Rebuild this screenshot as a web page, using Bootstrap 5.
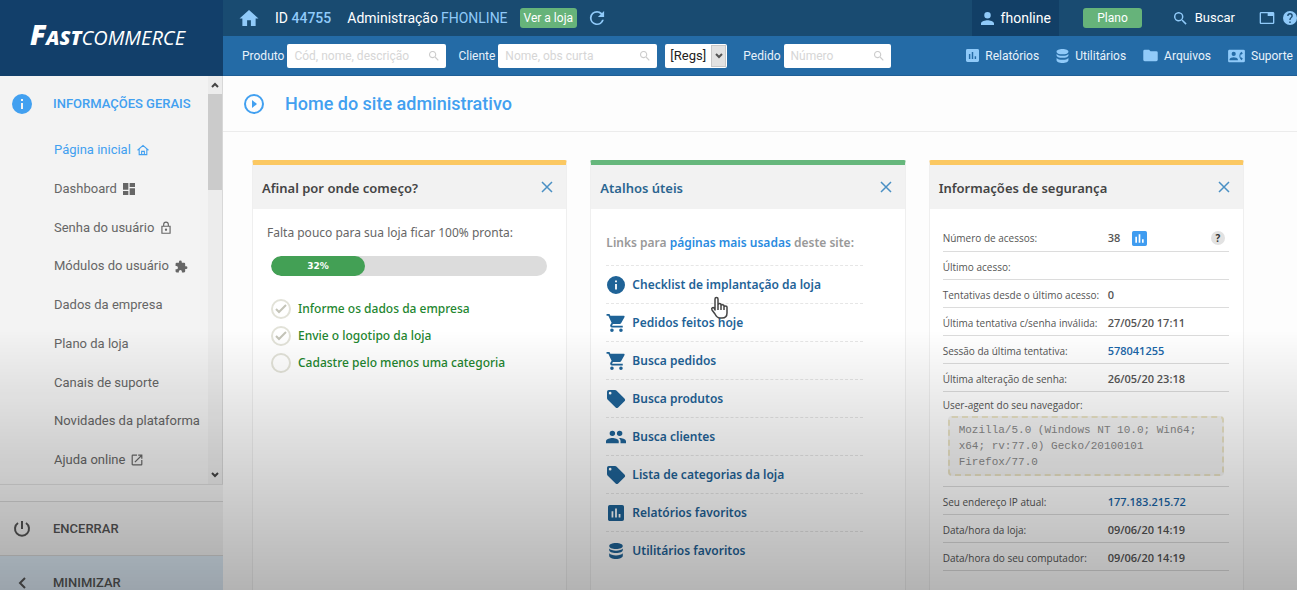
<!DOCTYPE html>
<html lang="pt-BR">
<head>
<meta charset="utf-8">
<meta name="viewport" content="width=device-width, initial-scale=1">
<title>Fastcommerce - Home do site administrativo</title>
<link href="https://cdn.jsdelivr.net/npm/bootstrap@5.3.0/dist/css/bootstrap.min.css" rel="stylesheet">
<style>
body{font-family:Roboto,"Liberation Sans",sans-serif;font-size:13px;line-height:20px;color:#666;background:#fdfdfd;height:100vh;overflow:hidden}
a{text-decoration:none;color:inherit}
svg{fill:currentColor;flex:none;display:block}
.ln{fill:none;stroke:currentColor;stroke-width:2}
/* sidebar */
.side{width:223px;height:100vh;background:#f3f3f3;overflow:hidden}
.brand{height:76px;background:#123f6a;color:#fff;padding:0 0 4px 30px;font:italic 400 20px/26px "Open Sans",sans-serif}
.brand b{font-weight:800}
.brand .cap{font-size:28px}
.menu-area{height:calc(100vh - 181px);border-bottom:1px solid #ddd}
.menu-head{height:56px;padding:0 12px;color:#42a0f0;font-weight:500}
.menu-head svg{margin-right:21px}
.menu-list{padding:8px 0 14px 54px}
.menu-list a{display:flex;align-items:center;gap:6px}
.menu-list .on{color:#42a0f0}
.sbar{width:15px;background:#ececec;border-right:1px solid #d8d8d8;color:#444}
.sbar i{height:96px;background:#cbcbcb}
.foot-item{height:54px;border:0;border-top:1px solid #d5d5d5;background:#f1f1f1;color:#555;font-weight:500;padding:0 12px;gap:21px}
.foot-item.mini{background:#dbe8f3}
/* bars */
.bar1{height:36px;background:#194b71;color:#fff;font-size:14px;padding-left:16px}
.bar2{height:40px;background:#246ba6;color:#e8f2fb;font-size:12px;padding-left:19px;border-bottom:1px solid #1f5f96}
.sky{color:#90caf9}
.fs13{font-size:13px}
.btn-go{background:#66b37a;color:#fff;font-size:12px;line-height:20px;padding:0 4px;border:0;border-radius:3px}
.btn-go.wide{padding:0 14px}
.user{background:#123f66;width:87px;height:36px;gap:7px}
.find{width:159px;height:24px;background:#fff;border-radius:2px;padding:0 7px;color:#ccc}
.find.short{width:107px}
.find input{border:0;outline:0;background:none;min-width:0;width:100%;padding:0;font-size:12px}
.find input::placeholder{color:#d6d6d6;opacity:1}
.regs{width:62px;height:24px;background:#fff;border-radius:2px}
.regs select{appearance:none;border:0;background:none;font-size:13px;color:#222;width:47px;padding:0 0 0 5px}
.regs span{width:16px;height:22px;margin-right:1px;background:#e2e2e2;border:1px solid #c8c8c8;color:#555}
.gap-l{margin-right:3px}
.tools{gap:17px;padding-right:4px}
.tools a{display:flex;align-items:center;gap:6px}
.tools svg{color:#90caf9}
/* content */
.page-head{height:56px;border-bottom:1px solid #ececec;padding-left:20px;gap:20px;color:#42a0f0}
.page-head h1{font-size:18px;line-height:24px;font-weight:500;margin:0}
.board{display:grid;grid-template-columns:repeat(3,minmax(0,1fr));gap:23px;padding:28px 53px 0 29px;font-family:"Noto Sans","Open Sans",sans-serif}
.panel{min-height:450px;background:#fff;border:1px solid #efefef;border-top:5px solid #fbc862;border-radius:2px}
.panel.green{border-top-color:#66b77c}
.panel header{height:44px;background:#f2f2f2;padding:0 13px 0 9px;color:#444}
.panel.green header{color:#2b6590}
.panel h2{font-size:13px;line-height:20px;font-weight:600;margin:2px 0 0}
.panel header button{border:0;background:none;padding:0;color:#4a90c4}
.todo{padding:14px 19px 14px 18px}
.todo p{margin:0 -4px 13px;font-size:12px}
.progress{height:20px;border-radius:10px;background:#dcdcdc}
.progress-bar{background:#43a055;border-radius:10px;font:bold 9px/20px "DejaVu Sans",sans-serif}
.todo ul{padding-top:19px}
.todo li{height:27px;gap:7px;color:#23862f;font-size:12px;font-weight:500}
.todo i{width:20px;height:20px;border:2px solid #e2e2d8;border-radius:50%;color:#c4c4b8}
.links{padding:24px 42px 0 15px;font-size:12px;font-weight:600;color:#999}
.links p{margin:0;line-height:20px;padding-bottom:12px}
.links p a{color:#2a8be0}
.links li{height:38px;border-top:1px dashed #e6e6e6;color:#1f6397}
.links li a{display:flex;align-items:center;gap:6px}
.hand{left:104px;top:30px;z-index:2}
.sec{padding:14px 14px 0 13px;font-family:"Open Sans","Noto Sans",sans-serif;font-size:11px;color:#555}
.sec table{width:100%;table-layout:fixed;line-height:16px}
.sec th{font-weight:400;width:165px;font-size:10px}
.sec th,.sec td{height:28px;padding:3px 0 0;border-bottom:1px solid #dcdcdc;white-space:nowrap}
.sec td{font-weight:600}
.sec td a{color:#1a66a8}
.sec td .ico{color:#3f9cf0}
.q{width:14px;height:14px;border:0;border-radius:50%;background:#e2e2e2;font:bold 10px/14px "Open Sans",sans-serif;color:#333;padding:0}
.sec .ua{padding:5px 5px 10px 0;white-space:normal;font-weight:400;font-size:10px}
.ua code{display:block;margin:3px 0 0 5px;padding:4px 9px;border:2px dashed #e9e2c4;border-radius:4px;background:#f3f3f3;color:#888;font:11px/16px "Liberation Mono",monospace}
.shade{position:fixed;inset:56vh 0 0 0;background:linear-gradient(rgba(0,0,0,0),rgba(0,0,0,.12) 40%,rgba(0,0,0,.29));pointer-events:none;z-index:9}
</style>
</head>
<body class="d-flex">
<svg width="0" height="0" class="position-absolute" aria-hidden="true"><defs>
<symbol id="home" viewBox="2 2 20 19"><path d="M10 20v-6h4v6h5v-8h3L12 3 2 12h3v8z"/></symbol>
<symbol id="homeo" viewBox="1 1 22 21"><path class="ln" d="M2 12 12 3l10 9M5 10v10h14V10M9.500 20v-6h5v6"/></symbol>
<symbol id="info" viewBox="2 2 20 20"><path d="M12 2a10 10 0 1 0 0 20 10 10 0 0 0 0-20zm1 15h-2v-6h2v6zm0-8h-2V7h2v2z"/></symbol>
<symbol id="refresh" viewBox="3 3 18 18"><path d="M17.650 6.350A7.960 7.960 0 0 0 12 4a8 8 0 1 0 7.730 10h-2.080A6 6 0 1 1 12 6c1.660 0 3.140.69 4.220 1.780L13 11h7V4z"/></symbol>
<symbol id="person" viewBox="4 4 16 16"><path d="M12 12a4 4 0 1 0 0-8 4 4 0 0 0 0 8zm0 2c-2.670 0-8 1.340-8 4v2h16v-2c0-2.660-5.330-4-8-4z"/></symbol>
<symbol id="search" viewBox="3 3 18 18"><path d="M15.500 14h-.79l-.28-.27A6.500 6.500 0 1 0 13.730 14.430l.27.28v.79l5 4.990L20.490 19zm-6 0a4.500 4.500 0 1 1 0-9 4.500 4.500 0 0 1 0 9z"/></symbol>
<symbol id="tab" viewBox="0 2 24 20"><path d="M21 3H3a2 2 0 0 0-2 2v14c0 1.100.9 2 2 2h18a2 2 0 0 0 2-2V5a2 2 0 0 0-2-2zm0 16H3V5h10v4h8z"/></symbol>
<symbol id="help" viewBox="2 2 20 20"><path d="M12 2a10 10 0 1 0 0 20 10 10 0 0 0 0-20zm1 17h-2v-2h2v2zm2.070-7.750-.9.920C13.450 12.900 13 13.500 13 15h-2v-.5c0-1.100.45-2.100 1.170-2.830l1.240-1.260A2 2 0 1 0 10 9H8a4 4 0 1 1 8 0c0 .88-.36 1.680-.93 2.250z"/></symbol>
<symbol id="chart" viewBox="3 3 18 18"><path d="M19 3H5a2 2 0 0 0-2 2v14c0 1.100.9 2 2 2h14a2 2 0 0 0 2-2V5a2 2 0 0 0-2-2zM9 17H7v-7h2v7zm4 0h-2V7h2v10zm4 0h-2v-4h2v4z"/></symbol>
<symbol id="db" viewBox="3 2 18 20"><path d="M12 2c5 0 8.500 1.700 8.500 3.800S17 9.600 12 9.600 3.500 7.900 3.500 5.800 7 2 12 2zM3.500 9c1.500 1.700 4.700 2.700 8.500 2.700s7-1 8.500-2.700v1.800c0 2.100-3.500 3.800-8.500 3.800s-8.500-1.700-8.500-3.800zm0 5.800c1.500 1.700 4.700 2.700 8.500 2.700s7-1 8.500-2.700v3.200c0 2.300-3.500 4-8.500 4s-8.500-1.700-8.500-4z"/></symbol>
<symbol id="folder" viewBox="2 3 20 18"><path d="M10 4H4a2 2 0 0 0-2 2v12c0 1.100.9 2 2 2h16a2 2 0 0 0 2-2V8a2 2 0 0 0-2-2h-8z"/></symbol>
<symbol id="contact" viewBox="0 2 24 20"><path d="M22 3H2C.9 3 0 3.900 0 5v14c0 1.100.9 2 2 2h20a2 2 0 0 0 2-2V5a2 2 0 0 0-2-2zM8 6a3 3 0 1 1 0 6 3 3 0 0 1 0-6zm6 12H2v-1c0-2 4-3.100 6-3.100s6 1.100 6 3.100v1zm3.850-4h1.640L21 16l-1.990 1.990A7.500 7.500 0 0 1 16 12a7.500 7.500 0 0 1 3.010-5.990L21 8l-1.510 2h-1.640a6 6 0 0 0 0 4z"/></symbol>
<symbol id="ext" viewBox="1 0 23 23"><path d="M20.500 11H19V7a2 2 0 0 0-2-2h-4V3.500a2.500 2.500 0 0 0-5 0V5H4a2 2 0 0 0-2 2v3.800h1.500a2.700 2.700 0 0 1 0 5.400H2V20c0 1.100.9 2 2 2h3.800v-1.500a2.700 2.700 0 0 1 5.400 0V22H17a2 2 0 0 0 2-2v-4h1.500a2.500 2.500 0 0 0 0-5z"/></symbol>
<symbol id="cart" viewBox="1 2 21 20"><path d="M7 18a2 2 0 1 0 0 4 2 2 0 0 0 0-4zM1 2v2h2l3.600 7.590-1.350 2.450C4.520 15.370 5.480 17 7 17h12v-2H7.420c-.14 0-.25-.11-.22-.37l.9-1.630h7.450c.75 0 1.410-.41 1.750-1.030l3.580-6.490A1 1 0 0 0 20 4H5.210l-.94-2H1zm16 16a2 2 0 1 0 0 4 2 2 0 0 0 0-4z"/></symbol>
<symbol id="tag" viewBox="2 2 20 20"><path d="m21.410 11.580-9-9A2 2 0 0 0 11 2H4a2 2 0 0 0-2 2v7c0 .55.22 1.050.59 1.420l9 9a2 2 0 0 0 2.820 0l7-7a2 2 0 0 0 0-2.840zM5.500 7a1.500 1.500 0 1 1 0-3 1.500 1.500 0 0 1 0 3z"/></symbol>
<symbol id="group" viewBox="1 3 22 18"><path d="M16 11a3 3 0 1 0 0-6 3 3 0 0 0 0 6zm-8 0a3 3 0 1 0 0-6 3 3 0 0 0 0 6zm0 2c-2.330 0-7 1.170-7 3.500V19h14v-2.500C15 14.170 10.330 13 8 13zm8 0-.97.05c1.160.84 1.970 1.970 1.970 3.450V19h6v-2.500c0-2.330-4.670-3.500-7-3.500z"/></symbol>
<symbol id="dash" viewBox="3 3 18 18"><path d="M3 13h8V3H3zm0 8h8v-6H3zm10 0h8V11h-8zm0-18v6h8V3z"/></symbol>
<symbol id="lock" viewBox="2 0 20 24"><path class="ln" d="M5 9h14v12H5zM8 9V6a4 4 0 0 1 8 0v3"/><circle cx="12" cy="15" r="2"/></symbol>
<symbol id="open" viewBox="2 2 20 20"><path d="M19 19H5V5h7V3H5a2 2 0 0 0-2 2v14c0 1.100.89 2 2 2h14a2 2 0 0 0 2-2v-7h-2zM14 3v2h3.590l-9.830 9.830 1.410 1.410L19 6.410V10h2V3z"/></symbol>
<symbol id="x" viewBox="0 0 12 12"><path d="m1 1 10 10M11 1 1 11" fill="none" stroke="currentColor" stroke-width="1.500"/></symbol>
<symbol id="up" viewBox="0 0 10 10"><path class="ln" d="m2 7 3-3 3 3"/></symbol>
<symbol id="down" viewBox="0 0 10 10"><path class="ln" d="m2 3 3 3 3-3"/></symbol>
</defs></svg>

<aside class="side flex-shrink-0 d-flex flex-column">
  <a href="#" class="brand d-flex align-items-center flex-shrink-0"><span><b><span class="cap">F</span>AST</b>COMMERCE</span></a>
  <div class="menu-area d-flex flex-shrink-0">
    <nav class="flex-fill d-flex flex-column">
      <div class="menu-head d-flex align-items-center"><svg width="20" height="20"><use href="#info"/></svg>INFORMAÇÕES GERAIS</div>
      <div class="menu-list flex-fill d-flex flex-column justify-content-between">
        <a href="#" class="on">Página inicial <svg width="12" height="12"><use href="#homeo"/></svg></a>
        <a href="#">Dashboard <svg width="12" height="12"><use href="#dash"/></svg></a>
        <a href="#">Senha do usuário <svg width="12" height="14"><use href="#lock"/></svg></a>
        <a href="#">Módulos do usuário <svg width="13" height="13"><use href="#ext"/></svg></a>
        <a href="#">Dados da empresa</a>
        <a href="#">Plano da loja</a>
        <a href="#">Canais de suporte</a>
        <a href="#">Novidades da plataforma</a>
        <a href="#">Ajuda online <svg width="12" height="12"><use href="#open"/></svg></a>
      </div>
    </nav>
    <div class="sbar d-flex flex-column align-items-center pb-1">
      <svg class="my-1" width="10" height="10"><use href="#up"/></svg>
      <i class="w-100"></i>
      <svg class="mt-auto" width="10" height="10"><use href="#down"/></svg>
    </div>
  </div>
  <button class="foot-item d-flex align-items-center mt-3 flex-shrink-0"><svg width="20" height="20" viewBox="0 0 20 20"><path class="ln" d="M6 4a7 7 0 1 0 8 0M10 2v8"/></svg>ENCERRAR</button>
  <button class="foot-item mini d-flex align-items-center flex-shrink-0"><svg width="20" height="20" viewBox="0 0 20 20"><path class="ln" d="m13 5-5 5 5 5"/></svg>MINIMIZAR</button>
</aside>

<div class="flex-fill overflow-hidden">
  <header class="text-nowrap">
    <div class="bar1 d-flex align-items-center">
      <a href="#" class="sky me-3" aria-label="Início"><svg width="20" height="18"><use href="#home"/></svg></a>
      <span class="me-3">ID <span class="sky fw-medium">44755</span></span>
      <span class="gap-l">Administração</span>
      <span class="sky me-2 pe-1">FHONLINE</span>
      <button class="btn-go me-2">Ver a loja</button>
      <a href="#" class="sky ms-1" aria-label="Atualizar"><svg width="16" height="16"><use href="#refresh"/></svg></a>
      <a href="#" class="user d-flex align-items-center justify-content-center ms-auto me-4"><svg class="sky" width="13" height="13"><use href="#person"/></svg>fhonline</a>
      <button class="btn-go wide me-4">Plano</button>
      <a href="#" class="d-flex align-items-center gap-2 ms-2 me-4 fs13"><svg class="sky" width="13" height="13"><use href="#search"/></svg>Buscar</a>
      <a href="#" class="sky me-2" aria-label="Janela"><svg width="16" height="14"><use href="#tab"/></svg></a>
      <a href="#" class="sky" aria-label="Ajuda"><svg width="14" height="14"><use href="#help"/></svg></a>
    </div>
    <div class="bar2 d-flex align-items-center">
      <label for="prod" class="gap-l">Produto</label>
      <div class="find d-flex align-items-center me-2"><input id="prod" placeholder="Cód, nome, descrição"><svg width="10" height="10"><use href="#search"/></svg></div>
      <label for="cli" class="gap-l ms-1">Cliente</label>
      <div class="find d-flex align-items-center me-2"><input id="cli" placeholder="Nome, obs curta"><svg width="10" height="10"><use href="#search"/></svg></div>
      <div class="regs d-flex align-items-center me-3"><select aria-label="Registros"><option>[Regs]</option></select><span class="d-flex align-items-center justify-content-center"><svg width="10" height="10"><use href="#down"/></svg></span></div>
      <label for="ped" class="gap-l">Pedido</label>
      <div class="find short d-flex align-items-center"><input id="ped" placeholder="Número"><svg width="10" height="10"><use href="#search"/></svg></div>
      <nav class="d-flex ms-auto tools">
        <a href="#"><svg width="13" height="13"><use href="#chart"/></svg>Relatórios</a>
        <a href="#"><svg width="13" height="14"><use href="#db"/></svg>Utilitários</a>
        <a href="#"><svg width="15" height="13"><use href="#folder"/></svg>Arquivos</a>
        <a href="#"><svg width="17" height="14"><use href="#contact"/></svg>Suporte</a>
      </nav>
    </div>
  </header>
  <main>
    <div class="page-head d-flex align-items-center"><svg width="22" height="22" viewBox="0 0 22 22"><circle class="ln" cx="11" cy="11" r="9"/><path d="m9 7 5 4-5 4z"/></svg><h1>Home do site administrativo</h1></div>
    <div class="board">
      <section class="panel">
        <header class="d-flex align-items-center justify-content-between"><h2>Afinal por onde começo?</h2><button aria-label="Fechar"><svg width="12" height="12"><use href="#x"/></svg></button></header>
        <div class="todo">
          <p>Falta pouco para sua loja ficar 100% pronta:</p>
          <div class="progress" role="progressbar" aria-label="Progresso" aria-valuenow="32" aria-valuemin="0" aria-valuemax="100"><div class="progress-bar" style="width:34%">32%</div></div>
          <ul class="list-unstyled m-0">
            <li class="d-flex align-items-center"><i class="d-flex align-items-center justify-content-center"><svg width="12" height="10" viewBox="0 0 12 10"><path class="ln" d="m1 5 3 3 7-7"/></svg></i><a href="#">Informe os dados da empresa</a></li>
            <li class="d-flex align-items-center"><i class="d-flex align-items-center justify-content-center"><svg width="12" height="10" viewBox="0 0 12 10"><path class="ln" d="m1 5 3 3 7-7"/></svg></i><a href="#">Envie o logotipo da loja</a></li>
            <li class="d-flex align-items-center"><i></i><a href="#">Cadastre pelo menos uma categoria</a></li>
          </ul>
        </div>
      </section>
      <section class="panel green">
        <header class="d-flex align-items-center justify-content-between"><h2>Atalhos úteis</h2><button aria-label="Fechar"><svg width="12" height="12"><use href="#x"/></svg></button></header>
        <div class="links">
          <p>Links para <a href="#">páginas mais usadas</a> deste site:</p>
          <ul class="list-unstyled m-0">
            <li class="d-flex align-items-center position-relative"><a href="#"><svg width="20" height="18"><use href="#info"/></svg>Checklist de implantação da loja</a>
              <svg class="hand position-absolute" width="20" height="24" viewBox="0 0 20 24"><path fill="#fff" stroke="#444" stroke-width="1.500" stroke-linejoin="round" d="M5 14 5 3c0-2 3-2 3 0v7l0-1c0-2 3-2 3 0v1c0-2 3-1.500 3 0v1c0-1.500 3-1.500 3 0v6c0 3-2 5-5 5h-2c-3 0-4-2-5-4l-3-4c-1-2 1-3 2-2zM11 9v5M14 10v4M8 9v5"/></svg></li>
            <li class="d-flex align-items-center"><a href="#"><svg width="20" height="18"><use href="#cart"/></svg>Pedidos feitos hoje</a></li>
            <li class="d-flex align-items-center"><a href="#"><svg width="20" height="18"><use href="#cart"/></svg>Busca pedidos</a></li>
            <li class="d-flex align-items-center"><a href="#"><svg width="20" height="18"><use href="#tag"/></svg>Busca produtos</a></li>
            <li class="d-flex align-items-center"><a href="#"><svg width="20" height="18"><use href="#group"/></svg>Busca clientes</a></li>
            <li class="d-flex align-items-center"><a href="#"><svg width="20" height="18"><use href="#tag"/></svg>Lista de categorias da loja</a></li>
            <li class="d-flex align-items-center"><a href="#"><svg width="20" height="16"><use href="#chart"/></svg>Relatórios favoritos</a></li>
            <li class="d-flex align-items-center"><a href="#"><svg width="20" height="16"><use href="#db"/></svg>Utilitários favoritos</a></li>
          </ul>
        </div>
      </section>
      <section class="panel">
        <header class="d-flex align-items-center justify-content-between"><h2>Informações de segurança</h2><button aria-label="Fechar"><svg width="12" height="12"><use href="#x"/></svg></button></header>
        <div class="sec">
          <table>
            <tr><th>Número de acessos:</th><td><div class="d-flex align-items-center"><span>38</span><a href="#" class="ico ms-2 ps-1" aria-label="Gráfico"><svg width="15" height="15"><use href="#chart"/></svg></a><button class="q ms-auto me-1">?</button></div></td></tr>
            <tr><th>Último acesso:</th><td></td></tr>
            <tr><th>Tentativas desde o último acesso:</th><td>0</td></tr>
            <tr><th>Última tentativa c/senha inválida:</th><td>27/05/20 17:11</td></tr>
            <tr><th>Sessão da última tentativa:</th><td><a href="#">578041255</a></td></tr>
            <tr><th>Última alteração de senha:</th><td>26/05/20 23:18</td></tr>
            <tr><td colspan="2" class="ua">User-agent do seu navegador:<code>Mozilla/5.0 (Windows NT 10.0; Win64; x64; rv:77.0) Gecko/20100101 Firefox/77.0</code></td></tr>
            <tr><th>Seu endereço IP atual:</th><td><a href="#">177.183.215.72</a></td></tr>
            <tr><th>Data/hora da loja:</th><td>09/06/20 14:19</td></tr>
            <tr><th>Data/hora do seu computador:</th><td>09/06/20 14:19</td></tr>
          </table>
        </div>
      </section>
    </div>
  </main>
</div>
<div class="shade"></div>
<script src="https://cdn.jsdelivr.net/npm/bootstrap@5.3.0/dist/js/bootstrap.bundle.min.js"></script>
</body>
</html>
